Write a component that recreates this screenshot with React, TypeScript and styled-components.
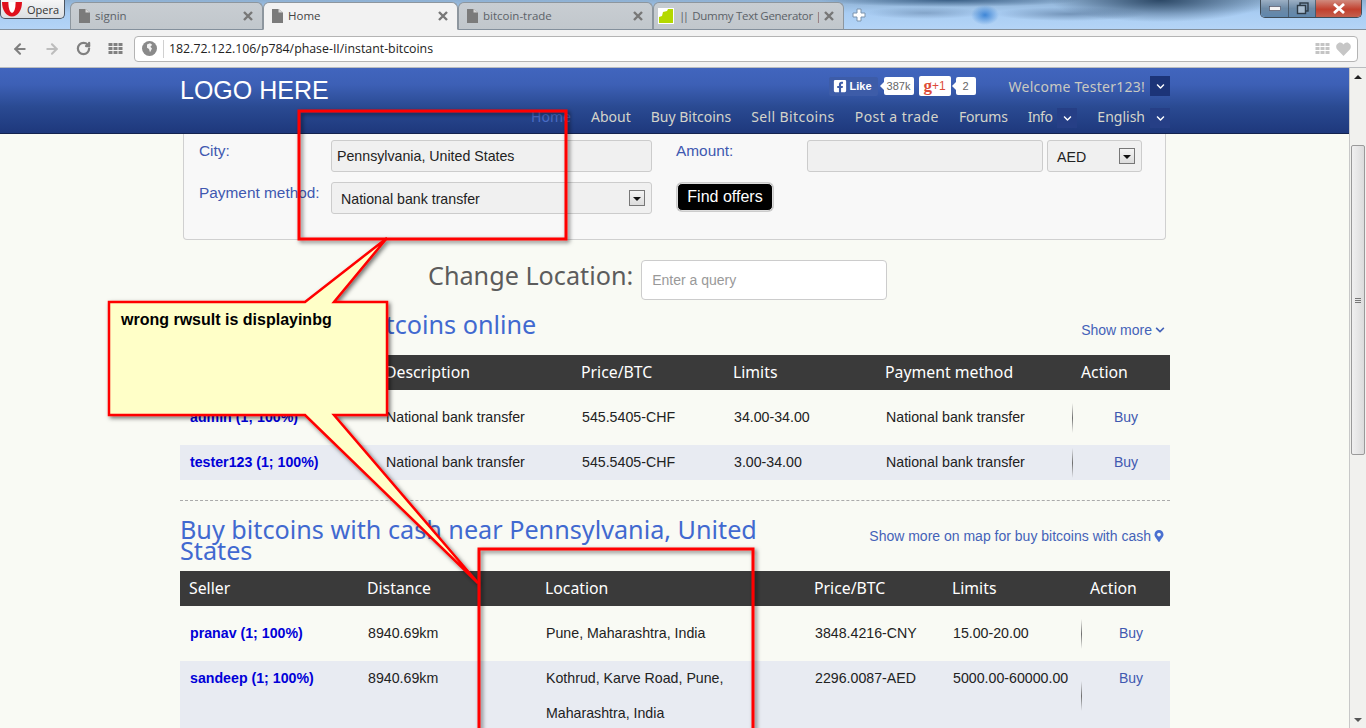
import React from 'react';
import styled, { createGlobalStyle } from 'styled-components';
import { ArrowLeft, ArrowRight, RotateCw } from 'lucide-react';
import { FaChevronDown, FaFacebookSquare, FaMapMarkerAlt } from 'react-icons/fa';

const GlobalStyle = createGlobalStyle`
  html, body { margin: 0; padding: 0; overflow: hidden; }
  body { font-family: "Liberation Sans", Arial, sans-serif; background: #f9faf4; }
  * { box-sizing: border-box; }
`;

const HEADING_FONT = `"Noto Sans", "Open Sans", sans-serif`;
const UI_FONT = `"Open Sans", "Noto Sans", sans-serif`;

const Screen = styled.div`
  position: relative;
  width: 1366px;
  height: 728px;
  overflow: hidden;
  display: flex;
  flex-direction: column;
`;

/* browser chrome */
const TabStrip = styled.div`
  height: 30px;
  flex: none;
  display: flex;
  align-items: flex-end;
  border-bottom: 1px solid #84909c;
  background:
    radial-gradient(ellipse 110px 22px at 1160px 0px, #2c4866 0%, rgba(44,72,102,0) 100%),
    radial-gradient(ellipse 75px 7px at 1070px 14px, rgba(70,100,135,0.55) 0%, rgba(70,100,135,0) 100%),
    radial-gradient(ellipse 60px 6px at 925px 13px, rgba(85,115,150,0.45) 0%, rgba(85,115,150,0) 100%),
    radial-gradient(ellipse 14px 10px at 985px 15px, #3f86d6 0%, rgba(63,134,214,0) 100%),
    radial-gradient(ellipse 130px 7px at 950px 0px, #3a5f86 0%, rgba(58,95,134,0) 100%),
    linear-gradient(to bottom, #8eb0d2 0%, #a9cdf3 45%, #b4d4f6 100%);
`;

const OperaButton = styled.div`
  flex: none;
  align-self: flex-start;
  width: 65px;
  height: 19px;
  margin-right: 5px;
  display: flex;
  align-items: center;
  gap: 5px;
  padding-left: 1px;
  border: 1px solid #4c5560;
  border-top: none;
  border-radius: 0 0 5px 5px;
  background: linear-gradient(to bottom, #f6f6f6, #dcdfe2);
  font: 11px ${UI_FONT};
  color: #333;
`;

const Tab = styled.div<{ $width: number; $active?: boolean; $pad?: number }>`
  flex: 0 0 ${p => p.$width}px;
  min-width: 0;
  height: 28px;
  display: flex;
  align-items: center;
  gap: 5px;
  padding: 0 9px 0 ${p => p.$pad ?? 8}px;
  margin-bottom: -1px;
  border: 1px solid #8d969e;
  border-bottom: ${p => (p.$active ? '1px solid #f2f2f2' : '1px solid #84909c')};
  border-radius: 6px 6px 0 0;
  background: ${p => (p.$active ? '#f2f2f2' : 'linear-gradient(to bottom, #c8cdd2, #c1c7cc)')};
  font: 11.5px ${UI_FONT};
  color: ${p => (p.$active ? '#444' : '#5c6268')};
`;

const TabTitle = styled.span<{ $tight?: boolean }>`
  flex: 1;
  min-width: 0;
  padding-bottom: 2px;
  overflow: hidden;
  white-space: nowrap;
  letter-spacing: ${p => (p.$tight ? '-0.3px' : '0')};
`;

const TabBars = styled.span`
  letter-spacing: -2.5px;
  margin-right: 3px;
`;

const NewTab = styled.div`
  flex: none;
  margin: 0 0 7px 8px;
  width: 14px;
  height: 14px;
  display: flex;
`;

const WindowControls = styled.div`
  flex: none;
  align-self: flex-start;
  margin-left: auto;
  margin-right: 4px;
  width: 102px;
  height: 18px;
  display: flex;
  border: 1px solid #3f4c58;
  border-top: none;
  border-radius: 0 0 5px 5px;
  overflow: hidden;
`;

const WindowButton = styled.div<{ $width: number; $close?: boolean }>`
  flex: 0 0 ${p => p.$width}px;
  display: flex;
  align-items: center;
  justify-content: center;
  border-right: 1px solid rgba(50, 60, 70, 0.6);
  background: ${p =>
    p.$close
      ? 'linear-gradient(to bottom, #d08a7e 0%, #c2402e 55%, #c4604e 100%)'
      : 'linear-gradient(to bottom, #9cb0c4 0%, #6d8aa6 50%, #5f87ad 100%)'};
`;

const Toolbar = styled.div`
  height: 38px;
  flex: none;
  display: flex;
  align-items: center;
  padding: 0 8px 0 12px;
  background: #f2f2f2;
  border-bottom: 1px solid #b9bcbf;
`;

const NavIcon = styled.div<{ $width: number }>`
  flex: 0 0 ${p => p.$width}px;
  display: flex;
  align-items: center;
`;

const UrlBar = styled.div`
  flex: 1;
  height: 26px;
  display: flex;
  align-items: center;
  padding: 0 6px 0 7px;
  background: #fff;
  border: 1px solid #b4b4b4;
  border-radius: 4px;
`;

const UrlDivider = styled.div`
  width: 1px;
  height: 18px;
  margin: 0 5px 0 6px;
  background: #d0d0d0;
`;

const UrlText = styled.span`
  flex: 1;
  font: 12.35px ${UI_FONT};
  color: #222;
`;

const HeartIcon = styled.svg`
  margin-left: 6px;
`;

/* page */
const Viewport = styled.div`
  flex: 1;
  display: flex;
  min-height: 0;
`;

const Page = styled.div`
  flex: 1;
  display: flex;
  flex-direction: column;
  min-width: 0;
  overflow: hidden;
  background: #f9faf4;
`;

const Scrollbar = styled.div`
  flex: 0 0 17px;
  display: flex;
  flex-direction: column;
  align-items: center;
  background: #f1f1ee;
  border-left: 1px solid #c8c8c8;
`;

const ScrollArrow = styled.div<{ $down?: boolean }>`
  flex: none;
  height: 17px;
  display: flex;
  align-items: center;
  justify-content: center;
  &::before {
    content: '';
    border-left: 4px solid transparent;
    border-right: 4px solid transparent;
    ${p => (p.$down ? 'border-top: 4px solid #555;' : 'border-bottom: 4px solid #222;')}
  }
`;

const ScrollThumb = styled.div`
  width: 14px;
  height: 310px;
  margin-top: 60px;
  display: flex;
  flex-direction: column;
  align-items: center;
  justify-content: center;
  gap: 1px;
  background: linear-gradient(to right, #f0f0f0, #dcdcdc);
  border: 1px solid #9a9a9a;
  border-radius: 2px;
  span { width: 6px; height: 1px; background: #777; }
`;

const ScrollSpacer = styled.div`
  flex: 1;
`;

const Header = styled.header`
  flex: none;
  height: 66px;
  padding-left: 180px;
  padding-right: 179px;
  display: flex;
  justify-content: space-between;
  background: linear-gradient(to bottom, #4165be 0%, #3d60b6 25%, #2a4a92 60%, #1e387c 100%);
  border-bottom: 1px solid #14234f;
`;

const Logo = styled.div`
  padding-top: 7px;
  font: 25px/30px "Liberation Sans", Arial, sans-serif;
  color: #fff;
`;

const HeaderRight = styled.div`
  display: flex;
  flex-direction: column;
  align-items: flex-end;
`;

const TopRow = styled.div`
  height: 20px;
  margin-top: 8px;
  display: flex;
  align-items: center;
`;

const NavRow = styled.nav`
  height: 20px;
  margin-top: 12px;
  display: flex;
  align-items: center;
  font: 14px ${HEADING_FONT};
  color: #d6d6cc;
`;

const NavLink = styled.a<{ $active?: boolean; $track?: number }>`
  margin: 0 0 4px 20px;
  letter-spacing: ${p => p.$track ?? 0}px;
  color: ${p => (p.$active ? '#4a6cc4' : '#d4d4ca')};
  white-space: nowrap;
`;

const ChevronBox = styled.div<{ $dim?: boolean }>`
  width: 20px;
  height: 20px;
  margin-left: 5px;
  display: flex;
  align-items: center;
  justify-content: center;
  background: ${p => (p.$dim ? '#263f86' : '#1c3478')};
  color: #fff;
`;

const LikeButton = styled.div`
  width: 49px;
  height: 19px;
  display: flex;
  align-items: center;
  gap: 3px;
  padding-left: 4px;
  background: #3d5ca8;
  border-radius: 2px;
  font: bold 11px "Liberation Sans", Arial, sans-serif;
  color: #fff;
`;

const CountBubble = styled.div<{ $width: number; $gap: number }>`
  position: relative;
  width: ${p => p.$width}px;
  height: 18px;
  margin-left: ${p => p.$gap}px;
  display: flex;
  align-items: center;
  justify-content: center;
  background: #fff;
  border-radius: 2px;
  font: 11px "Liberation Sans", Arial, sans-serif;
  color: #666;
  &::before {
    content: '';
    position: absolute;
    left: -4px;
    top: 5px;
    border-top: 4px solid transparent;
    border-bottom: 4px solid transparent;
    border-right: 4px solid #fff;
  }
`;

const PlusOne = styled.div`
  width: 32px;
  height: 20px;
  margin-left: 5px;
  display: flex;
  align-items: center;
  justify-content: center;
  background: #fff;
  border-radius: 2px;
  color: #dd4b39;
`;

const PlusG = styled.span`
  font: bold 17px/18px "Liberation Serif", serif;
`;

const PlusNum = styled.span`
  font: 12px "Liberation Sans", Arial, sans-serif;
`;

const Welcome = styled.span`
  margin-left: 33px;
  font: 14px ${HEADING_FONT};
  letter-spacing: 0.25px;
  color: #c9c9c2;
  white-space: nowrap;
`;

const Content = styled.main`
  width: 990px;
  margin-left: 180px;
`;

const SearchPanel = styled.section`
  width: 983px;
  height: 106px;
  margin-left: 3px;
  padding: 6px 0 0 15px;
  background: #f8f8f8;
  border: 1px solid #d0d0d0;
  border-top: none;
  border-radius: 0 0 4px 4px;
  display: grid;
  grid-template-columns: 132px 321px 155px auto;
  grid-auto-rows: 32px;
  row-gap: 10px;
  align-content: start;
`;

const FieldLabel = styled.label<{ $gap?: number }>`
  margin-left: ${p => p.$gap ?? 0}px;
  padding-top: 1px;
  font: 15.4px/20px "Liberation Sans", Arial, sans-serif;
  color: #4058b0;
  white-space: nowrap;
`;

const Field = styled.div<{ $width?: number; $pad?: number }>`
  width: ${p => (p.$width ? `${p.$width}px` : '100%')};
  height: 32px;
  display: flex;
  align-items: center;
  justify-content: space-between;
  padding: 0 6px 0 ${p => p.$pad ?? 5}px;
  background: #f0f0f0;
  border: 1px solid #ccc;
  border-radius: 3px;
  font: 14.2px "Liberation Sans", Arial, sans-serif;
  color: #222;
`;

const SelectValue = styled.span`
  padding-top: 2px;
`;

const FieldPair = styled.div`
  display: flex;
  gap: 4px;
`;

const SelectArrow = styled.span`
  flex: none;
  width: 16px;
  height: 16px;
  display: flex;
  align-items: center;
  justify-content: center;
  background: linear-gradient(to bottom, #f4f4f4, #dcdcdc);
  border: 1px solid #777;
  &::before {
    content: '';
    margin-top: 2px;
    border-left: 4px solid transparent;
    border-right: 4px solid transparent;
    border-top: 4px solid #111;
  }
`;

const FindButton = styled.button`
  justify-self: start;
  width: 96px;
  height: 28px;
  margin: 1px 0 0 25px;
  background: #000;
  border: 1px solid #ddd;
  border-radius: 5px;
  box-shadow: 0 0 0 1px #ccc;
  font: 16px "Liberation Sans", Arial, sans-serif;
  color: #fff;
`;

const LocationRow = styled.div`
  margin: 20px 0 0 248px;
  display: flex;
  align-items: flex-start;
  gap: 8px;
`;

const LocationLabel = styled.span`
  font: 25.2px/30px ${HEADING_FONT};
  color: #5c5c5c;
  white-space: nowrap;
`;

const QueryInput = styled.div`
  width: 246px;
  height: 40px;
  display: flex;
  align-items: center;
  padding-left: 10px;
  background: #fff;
  border: 1px solid #ccc;
  border-radius: 4px;
  font: 14px "Liberation Sans", Arial, sans-serif;
  color: #999;
`;

const SectionHead = styled.div<{ $height: number; $top: number }>`
  height: ${p => p.$height}px;
  margin-top: ${p => p.$top}px;
  display: flex;
  justify-content: space-between;
  align-items: flex-start;
`;

const SectionTitle = styled.h2<{ $width?: number; $top: number }>`
  margin: ${p => p.$top}px 0 0;
  width: ${p => (p.$width ? `${p.$width}px` : 'auto')};
  font: normal 25.2px/21px ${HEADING_FONT};
  color: #4169d0;
`;

const MoreLink = styled.a<{ $top: number; $gap: number }>`
  display: flex;
  align-items: center;
  gap: ${p => p.$gap}px;
  margin: ${p => p.$top}px 5px 0 0;
  font: 14px/16px "Liberation Sans", Arial, sans-serif;
  color: #4462b8;
  white-space: nowrap;
`;

const Row = styled.div<{ $cols: string; $shade?: boolean; $pad?: number }>`
  display: grid;
  grid-template-columns: ${p => p.$cols};
  padding: ${p => p.$pad ?? 0}px 0;
  background: ${p => (p.$shade ? '#e8ebf2' : 'transparent')};
`;

const HeadRow = styled.div<{ $cols: string }>`
  height: 35px;
  display: grid;
  grid-template-columns: ${p => p.$cols};
  align-items: center;
  background: #3a3a3a;
  font: 15.8px ${HEADING_FONT};
  color: #fff;
`;

const HeadCell = styled.div`
  padding: 0 0 2px 9px;
`;

const Cell = styled.div`
  padding-left: 10px;
  font: 14.2px/35px "Liberation Sans", Arial, sans-serif;
  color: #222;
`;

const SellerCell = styled(Cell)`
  font-weight: bold;
  color: #0000d8;
`;

const BuyCell = styled.div<{ $pad: number }>`
  padding-left: ${p => p.$pad}px;
  font: 14px/35px "Liberation Sans", Arial, sans-serif;
  color: #4058b0;
  background: linear-gradient(to bottom, rgba(110,110,110,0), #6e6e6e 50%, rgba(110,110,110,0)) left center / 1px 30px no-repeat;
`;

const Divider = styled.hr`
  margin: 20px 0 0;
  border: none;
  border-top: 1px dashed #aaa;
`;

/* annotations drawn on top of the screenshot */
const Annotations = styled.svg`
  position: absolute;
  left: 0;
  top: 0;
  width: 1366px;
  height: 728px;
  pointer-events: none;
`;

const CalloutText = styled.div`
  position: absolute;
  left: 121px;
  top: 311px;
  font: bold 16px/18px "Liberation Sans", Arial, sans-serif;
  color: #000;
`;

const PageGlyph = () => (
  <svg width="11" height="14" viewBox="0 0 11 14">
    <path d="M0 0h6.500L11 3.500V14H0z" fill="#7b7b7b" />
    <path d="M6.500 0v3.500H11z" fill="#d8d8d8" />
  </svg>
);

const CloseGlyph = () => (
  <svg width="10" height="10" viewBox="0 0 10 10">
    <path d="M1 1l8 8M9 1L1 9" stroke="#777" strokeWidth="2.4" />
  </svg>
);

const GridGlyph = ({ color }: { color: string }) => (
  <svg width="15" height="12" viewBox="0 0 15 12" fill={color}>
    {[0, 1, 2].map(r =>
      [0, 1, 2].map(c => <rect key={`${r}-${c}`} x={c * 5 + 0.5} y={r * 4} width="4" height="3" />)
    )}
  </svg>
);

type Column = { label: string };

const onlineCols = '196px 196px 152px 152px 196px 98px';
const cashCols = '178px 178px 269px 138px 138px 89px';

const onlineHead: Column[] = ['Seller', 'Description', 'Price/BTC', 'Limits', 'Payment method', 'Action'].map(label => ({ label }));
const cashHead: Column[] = ['Seller', 'Distance', 'Location', 'Price/BTC', 'Limits', 'Action'].map(label => ({ label }));

const onlineRows = [
  ['admin (1; 100%)', 'National bank transfer', '545.5405-CHF', '34.00-34.00', 'National bank transfer'],
  ['tester123 (1; 100%)', 'National bank transfer', '545.5405-CHF', '3.00-34.00', 'National bank transfer'],
];

const cashRows = [
  ['pranav (1; 100%)', '8940.69km', 'Pune, Maharashtra, India', '3848.4216-CNY', '15.00-20.00'],
  ['sandeep (1; 100%)', '8940.69km', 'Kothrud, Karve Road, Pune, Maharashtra, India', '2296.0087-AED', '5000.00-60000.00'],
];

const tabs = [
  { title: 'signin', width: 193 },
  { title: 'Home', width: 195, active: true },
  { title: 'bitcoin-trade', width: 195 },
];

const DataTable = ({ cols, head, rows, buyPad }: { cols: string; head: Column[]; rows: string[][]; buyPad: number }) => (
  <>
    <HeadRow $cols={cols}>
      {head.map(h => <HeadCell key={h.label}>{h.label}</HeadCell>)}
    </HeadRow>
    {rows.map((row, i) => (
      <Row key={row[0]} $cols={cols} $shade={i % 2 === 1} $pad={i % 2 === 0 ? 10 : 0}>
        <SellerCell>{row[0]}</SellerCell>
        {row.slice(1).map((v, j) => <Cell key={j}>{v}</Cell>)}
        <BuyCell $pad={buyPad}>Buy</BuyCell>
      </Row>
    ))}
  </>
);

const App = () => (
  <Screen>
    <GlobalStyle />
    <TabStrip>
      <OperaButton>
        <svg width="20" height="15" viewBox="0 0 20 15">
          <path d="M0 0h20c0 8-4 14.500-10 14.500S0 8 0 0z" fill="#e0101c" />
          <ellipse cx="10" cy="1" rx="3.600" ry="10" fill="#fff" />
        </svg>
        Opera
      </OperaButton>
      {tabs.map(t => (
        <Tab key={t.title} $width={t.width} $active={t.active}>
          <PageGlyph />
          <TabTitle>{t.title}</TabTitle>
          <CloseGlyph />
        </Tab>
      ))}
      <Tab $width={191} $pad={4}>
        <svg width="16" height="16" viewBox="0 0 16 16">
          <rect width="16" height="16" fill="#fff" />
          <path d="M1 15V9l3-1 1-4 4-1 1-2h5v14z" fill="#b4d800" />
        </svg>
        <TabTitle $tight><TabBars>||</TabBars> Dummy Text Generator |</TabTitle>
        <CloseGlyph />
      </Tab>
      <NewTab>
        <svg width="14" height="14" viewBox="0 0 14 14">
          <path d="M5 1h4v4h4v4H9v4H5V9H1V5h4z" fill="#fff" stroke="#7a93ad" strokeWidth="1" />
        </svg>
      </NewTab>
      <WindowControls>
        <WindowButton $width={28}>
          <svg width="12" height="6" viewBox="0 0 12 6"><rect x="0.5" y="0.5" width="11" height="4" fill="#f4f4f4" stroke="#445" strokeWidth="0.6" /></svg>
        </WindowButton>
        <WindowButton $width={27}>
          <svg width="13" height="13" viewBox="0 0 13 13" fill="none" stroke="#2d3a46" strokeWidth="1.4">
            <rect x="4" y="1" width="8" height="8" />
            <rect x="1.500" y="3.500" width="8" height="8" fill="#a8bccf" />
          </svg>
        </WindowButton>
        <WindowButton $width={46} $close>
          <svg width="14" height="11" viewBox="0 0 14 11">
            <path d="M2 1l10 9M12 1L2 10" stroke="#fff" strokeWidth="2.800" />
          </svg>
        </WindowButton>
      </WindowControls>
    </TabStrip>
    <Toolbar>
      <NavIcon $width={32}><ArrowLeft size={16} color="#808080" strokeWidth={3.2} /></NavIcon>
      <NavIcon $width={32}><ArrowRight size={16} color="#bdbdbd" strokeWidth={3.2} /></NavIcon>
      <NavIcon $width={32}><RotateCw size={15} color="#808080" strokeWidth={3.6} /></NavIcon>
      <NavIcon $width={26}><GridGlyph color="#808080" /></NavIcon>
      <UrlBar>
        <svg width="15" height="15" viewBox="0 0 15 15">
          <circle cx="7.500" cy="7.500" r="7.500" fill="#8a8a8a" />
          <path d="M5 3.500l3-1.200 2.200 1.500-1.800 2 1.600 1.800-2 3.600-1-3.200-2-1.300z" fill="#f2f2f2" />
        </svg>
        <UrlDivider />
        <UrlText>182.72.122.106/p784/phase-II/instant-bitcoins</UrlText>
        <GridGlyph color="#c4c4c4" />
        <HeartIcon width="15" height="14" viewBox="0 0 15 14">
          <path d="M7.500 14L1.200 7.500C-.6 5.400 0 2 2.600.9 4.600.1 6.500 1 7.500 2.600 8.500 1 10.400.1 12.400.9 15 2 15.600 5.400 13.800 7.500z" fill="#c6c6c6" />
        </HeartIcon>
      </UrlBar>
    </Toolbar>
    <Viewport>
      <Page>
        <Header>
          <Logo>LOGO HERE</Logo>
          <HeaderRight>
            <TopRow>
              <LikeButton><FaFacebookSquare size={14} /> Like</LikeButton>
              <CountBubble $width={30} $gap={6}>387k</CountBubble>
              <PlusOne><PlusG>g</PlusG><PlusNum>+1</PlusNum></PlusOne>
              <CountBubble $width={20} $gap={5}>2</CountBubble>
              <Welcome>Welcome Tester123!</Welcome>
              <ChevronBox><FaChevronDown size={9} /></ChevronBox>
            </TopRow>
            <NavRow>
              <NavLink $active>Home</NavLink>
              <NavLink>About</NavLink>
              <NavLink>Buy Bitcoins</NavLink>
              <NavLink $track={0.4}>Sell Bitcoins</NavLink>
              <NavLink $track={0.45}>Post a trade</NavLink>
              <NavLink $track={-0.2}>Forums</NavLink>
              <NavLink $track={-0.5}>Info</NavLink>
              <ChevronBox $dim><FaChevronDown size={9} /></ChevronBox>
              <NavLink>English</NavLink>
              <ChevronBox $dim><FaChevronDown size={9} /></ChevronBox>
            </NavRow>
          </HeaderRight>
        </Header>
        <Content>
          <SearchPanel>
            <FieldLabel>City:</FieldLabel>
            <Field>Pennsylvania, United States</Field>
            <FieldLabel $gap={24}>Amount:</FieldLabel>
            <FieldPair>
              <Field $width={236} />
              <Field $width={95} $pad={9}><SelectValue>AED</SelectValue> <SelectArrow /></Field>
            </FieldPair>
            <FieldLabel>Payment method:</FieldLabel>
            <Field $pad={9}><SelectValue>National bank transfer</SelectValue> <SelectArrow /></Field>
            <FindButton>Find offers</FindButton>
          </SearchPanel>
          <LocationRow>
            <LocationLabel>Change Location:</LocationLabel>
            <QueryInput>Enter a query</QueryInput>
          </LocationRow>
          <SectionHead $height={45} $top={10}>
            <SectionTitle $top={4}>Instant buys of bitcoins online</SectionTitle>
            <MoreLink $top={12} $gap={3}>Show more <FaChevronDown size={10} /></MoreLink>
          </SectionHead>
          <DataTable cols={onlineCols} head={onlineHead} rows={onlineRows} buyPad={42} />
          <Divider />
          <SectionHead $height={50} $top={20}>
            <SectionTitle $top={-2} $width={600}>Buy bitcoins with cash near Pennsylvania, United States</SectionTitle>
            <MoreLink $top={7} $gap={2}>Show more on map for buy bitcoins with cash <FaMapMarkerAlt size={12} color="#4a70d0" /></MoreLink>
          </SectionHead>
          <DataTable cols={cashCols} head={cashHead} rows={cashRows} buyPad={38} />
        </Content>
      </Page>
      <Scrollbar>
        <ScrollArrow />
        <ScrollThumb><span /><span /><span /></ScrollThumb>
        <ScrollSpacer />
        <ScrollArrow $down />
      </Scrollbar>
    </Viewport>
    <Annotations viewBox="0 0 1366 728">
      <defs>
        <filter id="markup-shadow" x="-10%" y="-10%" width="120%" height="120%">
          <feDropShadow dx="2" dy="2" stdDeviation="2" floodColor="#000" floodOpacity="0.55" />
        </filter>
      </defs>
      <g filter="url(#markup-shadow)" stroke="#ff0000" strokeWidth="3" fill="none">
        <rect x="299" y="111" width="267" height="128" />
        <rect x="479" y="549" width="274" height="220" />
        <path
          d="M109 302H305L387 238L334 302H387V415H334L478 583L305 415H109Z"
          fill="#ffffc8"
          strokeWidth="2.500"
          strokeLinejoin="miter"
          strokeMiterlimit="4"
        />
      </g>
    </Annotations>
    <CalloutText>wrong rwsult is displayinbg</CalloutText>
  </Screen>
);

export default App;
